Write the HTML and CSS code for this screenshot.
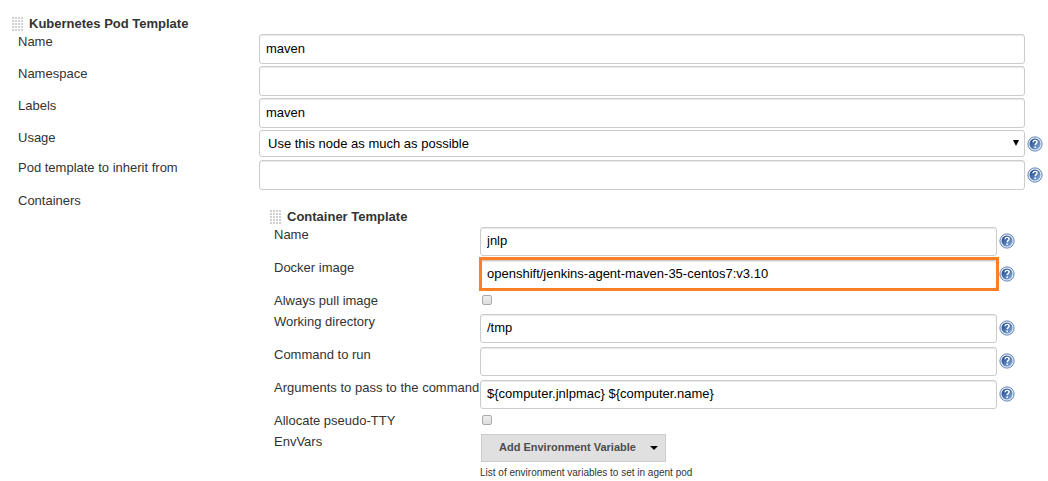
FILE: index.html
```
<!DOCTYPE html>
<html lang="en">
<head>
<meta charset="utf-8">
<title>Kubernetes Pod Template</title>
<link rel="stylesheet" href="styles.css">
</head>
<body>
<svg class="defs" aria-hidden="true">
  <defs>
    <linearGradient id="ball" x1="0" y1="0" x2="1" y2="1">
      <stop offset="0.100" stop-color="#1f4a8c"/>
      <stop offset="1" stop-color="#8fb2e0"/>
    </linearGradient>
    <symbol id="help" viewBox="0 0 16 16">
      <circle cx="8" cy="8" r="7.100" fill="#eef3fa" stroke="#5f81b3" stroke-width="1"/>
      <circle cx="8" cy="8" r="5.500" fill="url(#ball)"/>
      <path d="M6 6.300C6.100 4.900 7 4.400 8.100 4.400c1.200 0 2 .7 2 1.700 0 1.500-1.900 1.600-1.900 3.200" fill="none" stroke="#fff" stroke-width="1.400"/>
      <path d="M7.400 10.400h1.600v1.600h-1.600z" fill="#fff"/>
    </symbol>
    <pattern id="dots" width="3" height="3" patternUnits="userSpaceOnUse">
      <path d="M0 0h2v2h-2z" fill="#d0d0d0"/>
    </pattern>
    <symbol id="grip" viewBox="0 0 11 15">
      <path d="M0 0h11v15h-11z" fill="url(#dots)"/>
    </symbol>
  </defs>
</svg>
<form class="pod">
  <h2 class="heading"><svg class="grip"><use href="#grip"/></svg>Kubernetes Pod Template</h2>
  <div class="row">
    <label class="label" for="pod-name">Name</label>
    <input class="field" id="pod-name" type="text" value="maven">
  </div>
  <div class="row">
    <label class="label" for="namespace">Namespace</label>
    <input class="field" id="namespace" type="text">
  </div>
  <div class="row">
    <label class="label" for="labels">Labels</label>
    <input class="field" id="labels" type="text" value="maven">
  </div>
  <div class="row">
    <label class="label" for="usage">Usage</label>
    <div class="select-box">
      <select class="field select" id="usage"><option>Use this node as much as possible</option></select>
      <svg class="arrow" viewBox="0 0 6 6" aria-hidden="true"><path d="M0 0h6L3 6z"/></svg>
    </div>
    <a class="help" href="#" aria-label="Help for Usage"><svg><use href="#help"/></svg></a>
  </div>
  <div class="row">
    <label class="label" for="inherit">Pod template to inherit from</label>
    <input class="field" id="inherit" type="text">
    <a class="help" href="#" aria-label="Help for Pod template to inherit from"><svg><use href="#help"/></svg></a>
  </div>
  <div class="row containers">
    <div class="label">Containers</div>
    <section class="container">
      <h2 class="heading"><svg class="grip"><use href="#grip"/></svg>Container Template</h2>
      <div class="row">
        <label class="label" for="name">Name</label>
        <input class="field" id="name" type="text" value="jnlp">
        <a class="help" href="#" aria-label="Help for Name"><svg><use href="#help"/></svg></a>
      </div>
      <div class="row">
        <label class="label" for="image">Docker image</label>
        <div class="highlight"><input class="field" id="image" type="text" value="openshift/jenkins-agent-maven-35-centos7:v3.10"></div>
        <a class="help" href="#" aria-label="Help for Docker image"><svg><use href="#help"/></svg></a>
      </div>
      <div class="row">
        <label class="label" for="pull">Always pull image</label>
        <input class="check" id="pull" type="checkbox">
      </div>
      <div class="row">
        <label class="label" for="dir">Working directory</label>
        <input class="field" id="dir" type="text" value="/tmp">
        <a class="help" href="#" aria-label="Help for Working directory"><svg><use href="#help"/></svg></a>
      </div>
      <div class="row">
        <label class="label" for="command">Command to run</label>
        <input class="field" id="command" type="text">
        <a class="help" href="#" aria-label="Help for Command to run"><svg><use href="#help"/></svg></a>
      </div>
      <div class="row">
        <label class="label" for="args">Arguments to pass to the command</label>
        <input class="field" id="args" type="text" value="${computer.jnlpmac} ${computer.name}">
        <a class="help" href="#" aria-label="Help for Arguments"><svg><use href="#help"/></svg></a>
      </div>
      <div class="row">
        <label class="label" for="tty">Allocate pseudo-TTY</label>
        <input class="check" id="tty" type="checkbox">
      </div>
      <div class="row">
        <div class="label">EnvVars</div>
        <div class="env">
          <button class="add" type="button">Add Environment Variable<svg class="caret" viewBox="0 0 8 4" aria-hidden="true"><path d="M0 0h8L4 4z"/></svg></button>
          <p class="hint">List of environment variables to set in agent pod</p>
        </div>
      </div>
    </section>
  </div>
</form>
</body>
</html>
```
FILE: styles.css
```
* { box-sizing: border-box; }
body {
  margin: 0;
  background: #fff;
  color: #333;
  font: 13px/15px "Liberation Sans", Arial, sans-serif;
}
.defs { position: absolute; width: 0; height: 0; }
.pod { padding: 16px 0 0 12px; }
.heading {
  display: flex;
  align-items: flex-start;
  gap: 6px;
  margin: 0;
  height: 18px;
  font-size: 13px;
  line-height: 15px;
}
.grip { width: 11px; height: 15px; margin-top: 1px; }
.row {
  display: grid;
  grid-template-columns: 241px minmax(0, 1fr) 23px;
  align-items: start;
  margin: 0 0 2px 6px;
}
.field {
  width: 100%;
  height: 30px;
  padding: 0 6px 2px;
  border: 1px solid #ccc;
  border-radius: 3px;
  box-shadow: inset 0 1px 1px #e8e8e8;
  background: #fff;
  color: #000;
  font: inherit;
}
.select-box { position: relative; padding-bottom: 1px; }
.select {
  display: block;
  appearance: none;
  height: 27px;
  padding: 0 8px;
  box-shadow: none;
}
.arrow { position: absolute; right: 6px; top: 10px; width: 6px; height: 6px; pointer-events: none; }
.help { align-self: center; padding-left: 2px; height: 16px; }
.help svg { display: block; width: 16px; height: 16px; }
.containers { margin-top: 3px; }
.container { padding: 16px 0 0 11px; }
.container .row {
  grid-template-columns: 206px minmax(0, 1fr) 28px;
  margin: 0 0 4px 4px;
}
.container .field { height: 29px; }
.container .help { height: 17px; }
.highlight { position: relative; }
.highlight .field { display: block; }
.highlight::after {
  content: "";
  position: absolute;
  inset: -3px -2px -2px -1px;
  border: 3px solid #ff7f27;
  pointer-events: none;
}
.container .check {
  appearance: none;
  width: 10px;
  height: 10px;
  margin: 2px 2px 5px;
  border: 1px solid #aaa;
  border-radius: 2px;
  background: linear-gradient(#eee, #ddd);
}
.label { white-space: nowrap; }
.add {
  display: flex;
  align-items: center;
  gap: 14px;
  height: 28px;
  margin-left: 1px;
  padding: 0 7px 1px 17px;
  border: 1px solid #ccc;
  border-radius: 0;
  background: #e0e0e0;
  color: #4d4d4d;
  font: bold 11px/15px "Liberation Sans", Arial, sans-serif;
}
.caret { width: 8px; height: 4px; fill: #000; }
.hint { margin: 3px 0 0; font-size: 10px; line-height: 15px; }
```
